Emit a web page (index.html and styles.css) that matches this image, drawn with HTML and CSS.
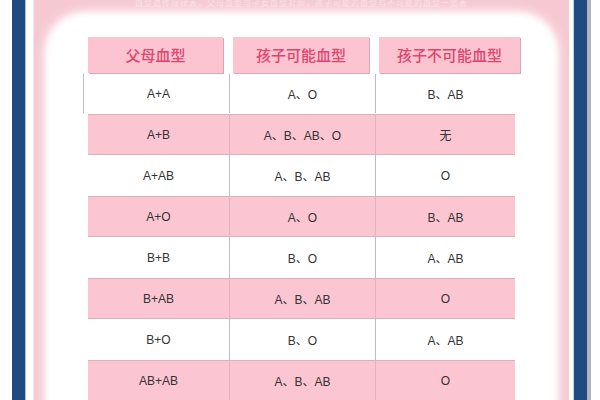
FILE: index.html
```html
<!DOCTYPE html>
<html lang="zh">
<head>
<meta charset="utf-8">
<link rel="stylesheet" href="styles.css">
</head>
<body>
<div class="page">
  <div class="sp12"></div>
  <div class="bar bar-left"></div>
  <div class="sp8"></div>
  <div class="frame">
    <div class="top-text">血型遗传规律表，父母血型与子女血型对照，孩子可能的血型与不可能的血型一览表</div>
    <div class="paper">
      <div class="head">
        <div class="hcell h1">父母血型</div>
        <div class="hcell h2">孩子可能血型</div>
        <div class="hcell h3">孩子不可能血型</div>
      </div>
      <div class="row first"><div>A+A</div><div class="line">A、O</div><div class="line">B、AB</div></div>
      <div class="row pink"><div>A+B</div><div class="line">A、B、AB、O</div><div class="line">无</div></div>
      <div class="row"><div>A+AB</div><div class="line">A、B、AB</div><div class="line">O</div></div>
      <div class="row pink"><div>A+O</div><div class="line">A、O</div><div class="line">B、AB</div></div>
      <div class="row"><div>B+B</div><div class="line">B、O</div><div class="line">A、AB</div></div>
      <div class="row pink"><div>B+AB</div><div class="line">A、B、AB</div><div class="line">O</div></div>
      <div class="row"><div>B+O</div><div class="line">B、O</div><div class="line">A、AB</div></div>
      <div class="row pink"><div>AB+AB</div><div class="line">A、B、AB</div><div class="line">O</div></div>
    </div>
  </div>
  <div class="sp5"></div>
  <div class="bar bar-right"></div>
  <div class="gray"></div>
</div>
</body>
</html>
```
FILE: styles.css
```css
html, body {
  margin: 0;
  padding: 0;
  background: #fff;
}
.page {
  display: flex;
  height: 400px;
  overflow: hidden;
  font-family: "Liberation Sans", "Noto Sans CJK SC", sans-serif;
}
.sp12 { width: 12px; flex: none; }
.sp8 { width: 8px; flex: none; border-right: 1px solid #e4ecf6; box-sizing: border-box; }
.sp5 { width: 5px; flex: none; border-right: 1px solid #b9d3ee; box-sizing: border-box; }
.bar {
  width: 13px;
  flex: none;
  background: #1f4b80;
}
.bar-left { border-right: 1px solid #9fc0e4; }
.gray {
  width: 4px;
  flex: none;
  background: #b4b4ba;
}
.frame {
  width: 535px;
  flex: none;
  background: #f6c8d1;
  overflow: hidden;
}
.top-text {
  height: 18px;
  font-size: 8px;
  line-height: 8px;
  letter-spacing: 1px;
  color: rgba(255, 255, 255, 0.45);
  text-align: center;
  white-space: nowrap;
  overflow: hidden;
}
.paper {
  margin: 0 17px;
  height: 420px;
  background: #fff;
  border-radius: 34px 34px 0 0;
  box-shadow: 0 0 6px 5px #fff, 0 0 12px 8px rgba(255, 255, 255, 0.6);
  padding: 19px 0 0 37px;
  box-sizing: border-box;
}
.head {
  display: flex;
  gap: 10px;
}
.hcell {
  height: 36px;
  line-height: 36px;
  text-align: center;
  background: #fcc3d1;
  color: #e0456c;
  font-family: "Noto Sans CJK SC", sans-serif;
  font-size: 15px;
  font-weight: 500;
  box-shadow: 1px 1px 0 #d7a7b2;
}
.h1 { width: 135px; }
.h2 { width: 136px; }
.h3 { width: 141px; }
.row {
  display: grid;
  grid-template-columns: 141px 146px 140px;
  width: 427px;
  height: 41px;
  box-sizing: border-box;
  font-size: 12px;
  color: #333;
}
.row > div {
  display: flex;
  align-items: center;
  justify-content: center;
}
.row .line {
  border-left: 1px solid #bdbdbd;
}
.row.pink {
  background: #fcc5d2;
  border-top: 1px solid #dab0ba;
  border-bottom: 1px solid #dab0ba;
}
.row.pink .line {
  border-left-color: #e2b4bf;
}
.row.first {
  margin-left: -5px;
  padding-left: 4px;
  width: 432px;
  border-left: 1px solid #bdbdbd;
  border-top: 1px solid #fff;
  border-bottom: 1px solid #fff;
}
```
